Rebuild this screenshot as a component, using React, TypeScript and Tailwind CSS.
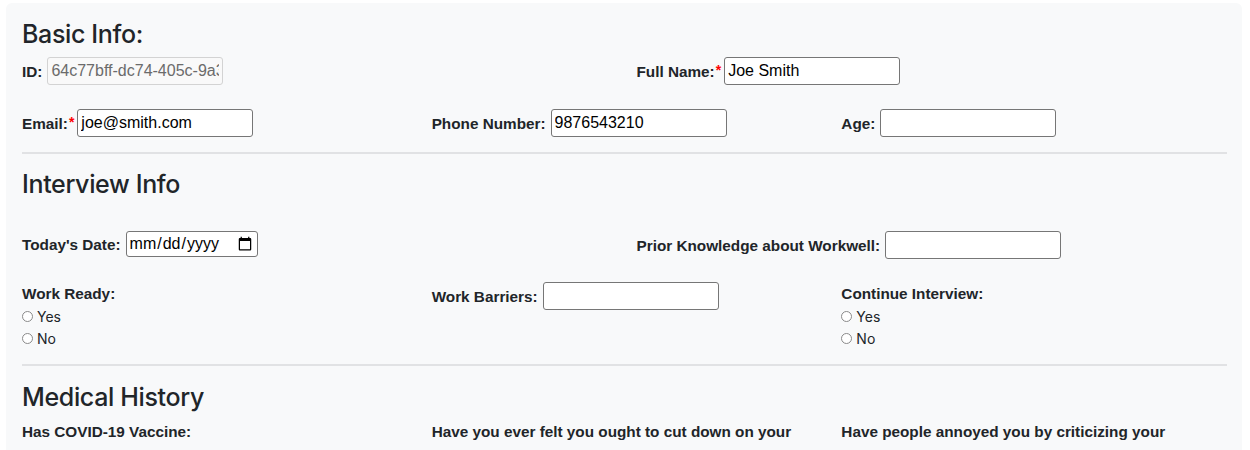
import React from 'react';

const labelBase =
  "font-['Liberation_Sans',Arial,sans-serif] font-bold text-[15.3px] leading-[21px] text-[#212529]";
const labelCls = `${labelBase} whitespace-nowrap`;
const inputCls =
  "h-[28px] w-[176px] rounded-[3px] border border-[#767676] bg-white px-[3px] font-['Liberation_Sans',Arial,sans-serif] text-[16px] text-black outline-none";
const headingCls =
  "font-['Inter',sans-serif] font-medium text-[25px] leading-[34px] text-[#212529] tracking-[-0.35px]";
const questionCls =
  "min-w-0 font-['Liberation_Sans',Arial,sans-serif] font-bold text-[15.3px] leading-[24px] text-[#212529]";

const Star = () => (
  <span className="mr-[3px] ml-[1px] self-start mt-[8px] font-['Liberation_Sans',Arial,sans-serif] text-[14px] font-bold leading-[10px] text-[#ff0000]">
    *
  </span>
);

interface FieldProps {
  label: string;
  value?: string;
  required?: boolean;
}

const Field: React.FC<FieldProps> = ({ label, value, required }) => (
  <div className="flex min-w-0 items-center">
    <label className={labelCls}>{label}</label>
    {required ? <Star /> : <span className="w-[5px]" />}
    <input type="text" defaultValue={value} className={inputCls} />
  </div>
);

const RadioGroup: React.FC<{ label: string; name: string }> = ({ label, name }) => (
  <div className="min-w-0 pt-[1px]">
    <div className={labelCls}>{label}</div>
    <div className="mt-[1px]">
      {['Yes', 'No'].map((opt) => (
        <label key={opt} className="flex h-[22px] items-center font-['Inter',sans-serif] text-[14px] text-[#212529]">
          <input
            type="radio"
            name={name}
            className="mr-[4px] h-[11px] w-[11px] appearance-none rounded-full border border-[#8a8a8a] bg-white"
          />
          {opt}
        </label>
      ))}
    </div>
  </div>
);

const Divider = () => <div className="h-[2px] bg-[#e1e2e4]" />;

export default function App() {
  return (
    <div className="min-h-[450px] bg-white pt-[3px] pl-[6px] pr-[8px]">
      <div className="min-h-[500px] rounded-[6px] bg-[#f8f9fa] pl-4 pr-[15px] pt-[14px]">
        {/* Basic info */}
        <h3 className={headingCls}>Basic Info:</h3>
        <div className="mt-[6px] grid grid-cols-2 gap-x-6">
          <div className="flex min-w-0 items-center">
            <label className={labelCls}>ID:</label>
            <span className="w-[5px]" />
            <input
              type="text"
              disabled
              defaultValue="64c77bff-dc74-405c-9a3e-2b1f0c8d7e61"
              className="h-[28px] w-[176px] rounded-[3px] border border-[#d3d3d3] bg-[#f9f9f9] px-[3px] font-['Liberation_Sans',Arial,sans-serif] text-[16px] text-[#6b6b6b] outline-none"
            />
          </div>
          <Field label="Full Name:" value="Joe Smith" required />
        </div>
        <div className="mt-[24px] grid grid-cols-3 gap-x-6">
          <Field label="Email:" value="joe@smith.com" required />
          <Field label="Phone Number:" value="9876543210" />
          <Field label="Age:" />
        </div>

        <div className="mt-[15px]">
          <Divider />
        </div>

        {/* Interview */}
        <h3 className={`${headingCls} mt-[13px]`}>Interview Info</h3>
        <div className="mt-[30px] grid grid-cols-2 items-start gap-x-6">
          <div className="flex min-w-0 items-center">
            <label className={labelCls}>Today's Date:</label>
            <span className="w-[5px]" />
            <input
              type="date"
              className="h-[26px] w-[132px] rounded-[3px] border border-[#767676] bg-white px-[2px] font-['Liberation_Sans',Arial,sans-serif] text-[16px] text-black outline-none"
            />
          </div>
          <Field label="Prior Knowledge about Workwell:" />
        </div>
        <div className="mt-[23px] grid grid-cols-3 items-start gap-x-6">
          <RadioGroup label="Work Ready:" name="workReady" />
          <Field label="Work Barriers:" />
          <RadioGroup label="Continue Interview:" name="continue" />
        </div>

        <div className="mt-[15px]">
          <Divider />
        </div>

        {/* Medical */}
        <h3 className={`${headingCls} mt-[14px]`}>Medical History</h3>
        <div className="mt-[6px] grid grid-cols-3 items-start gap-x-6">
          <div className={questionCls}>Has COVID-19 Vaccine:</div>
          <div className={questionCls}>Have you ever felt you ought to cut down on your drinking?</div>
          <div className={questionCls}>Have people annoyed you by criticizing your drinking?</div>
        </div>
      </div>
    </div>
  );
}
